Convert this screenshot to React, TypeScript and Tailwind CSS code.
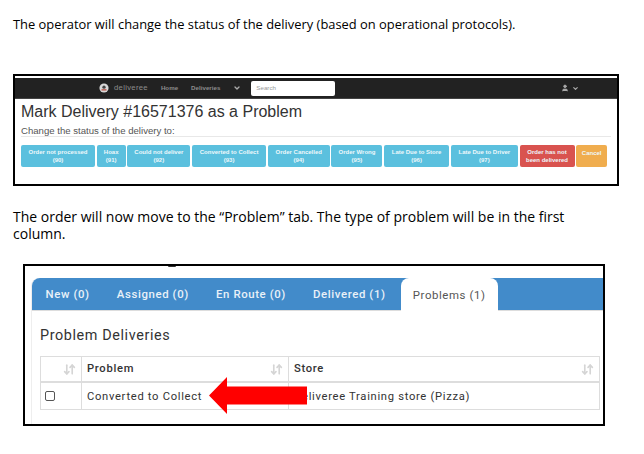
import React from "react";
import { ArrowDownUp, ChevronDown, User } from "lucide-react";

const statusButtons = [
  { label: "Order not processed", code: "(90)", width: "w-[74px]", color: "bg-[#5bc0de]" },
  { label: "Hoax", code: "(91)", width: "w-[29px]", color: "bg-[#5bc0de]" },
  { label: "Could not deliver", code: "(92)", width: "w-[63px]", color: "bg-[#5bc0de]" },
  { label: "Converted to Collect", code: "(93)", width: "w-[74px]", color: "bg-[#5bc0de]" },
  { label: "Order Cancelled", code: "(94)", width: "w-[62px]", color: "bg-[#5bc0de]" },
  { label: "Order Wrong", code: "(95)", width: "w-[51px]", color: "bg-[#5bc0de]" },
  { label: "Late Due to Store", code: "(96)", width: "w-[65px]", color: "bg-[#5bc0de]" },
  { label: "Late Due to Driver", code: "(97)", width: "w-[67px]", color: "bg-[#5bc0de]" },
  { label: "Order has not", code: "been delivered", width: "w-[55px]", color: "bg-[#d9534f]" },
  { label: "Cancel", code: "", width: "w-[31px] pb-[7px]", color: "bg-[#f0ad4e]" },
];

const tabs = ["New (0)", "Assigned (0)", "En Route (0)", "Delivered (1)"];

const SortIcon = () => <ArrowDownUp className="h-[13px] w-[13px] text-[#d5d5d5]" strokeWidth={3} />;

const DeliveryBar = () => (
  <div className="mt-[2px] flex h-[21px] items-center bg-[#222222] border-b border-[#444] pl-[84px] pr-[38px] text-[6.2px] font-bold text-[#8d8d8d]">
    <svg viewBox="0 0 12 12" className="mr-[5px] h-[10px] w-[10px]">
      <circle cx="6" cy="6" r="5.5" fill="#d8d8d8" />
      <path d="M3 7.5h6v1.5H3z" fill="#b84a3c" />
      <circle cx="6" cy="5" r="2" fill="#444" />
    </svg>
    <span className="mr-[13px] text-[7.7px] font-normal tracking-[0.3px]">deliveree</span>
    <span className="mr-[13px]">Home</span>
    <span className="mr-[13px]">Deliveries</span>
    <ChevronDown className="mr-[10px] h-[8px] w-[8px] text-[#aaa]" strokeWidth={4} />
    <div className="flex h-[15px] w-[84px] items-center rounded-[2px] bg-white pl-[5px] font-normal text-[#999]">Search</div>
    <div className="ml-auto flex items-center gap-[3px] text-[#aaa]">
      <User className="h-[8px] w-[8px] fill-current" />
      <ChevronDown className="h-[7px] w-[7px]" strokeWidth={4} />
    </div>
  </div>
);

const App = () => (
  <div className="h-[454px] w-[644px] overflow-hidden bg-white font-['Open_Sans',sans-serif] text-black">
    <p className="pl-[13px] pt-[15px] text-[12.9px] leading-[18px]">
      The operator will change the status of the delivery (based on operational protocols).
    </p>

    <div className="ml-[13px] mt-[41px] h-[112px] w-[606px] border-2 border-black font-['Liberation_Sans',sans-serif]">
      <DeliveryBar />
      <div className="px-[6px] pt-[3px] text-[16px] leading-[20px] text-[#333]">Mark Delivery #16571376 as a Problem</div>
      <div className="mx-[6px] mt-[3px] border-b border-[#e8e8e8] text-[9.6px] leading-[11px] text-[#555]">
        Change the status of the delivery to:
      </div>
      <div className="ml-[6px] mt-[8px] flex gap-[1.7px]">
        {statusButtons.map((b) => (
          <div
            key={b.label}
            className={`flex h-[22px] shrink-0 flex-col items-center justify-center rounded-[2px] text-[6px] font-bold leading-[8px] text-[#eef8fb] ${b.width} ${b.color}`}
          >
            <span className="whitespace-nowrap">{b.label}</span>
            {b.code && <span className="whitespace-nowrap">{b.code}</span>}
          </div>
        ))}
      </div>
    </div>

    <p className="ml-[13px] mt-[22px] w-[580px] text-[14px] leading-[17px]">
      The order will now move to the “Problem” tab. The type of problem will be in the first column.
    </p>

    <div className="relative ml-[23px] mt-[22px] h-[162px] w-[582px] overflow-hidden border-2 border-black pl-[6px] pt-[12px] font-['Roboto',sans-serif] tracking-[0.6px]">
      {/* speck left at the top edge of the crop */}
      <div className="absolute left-[143px] top-0 h-[1px] w-[8px] rounded-b-full bg-[#333]" />
      <div className="h-[170px] rounded-l-[8px] border-l border-b border-[#eeeeee]">
        <div className="flex h-[33px] items-end rounded-tl-[8px] border-b border-[#ddd] bg-[#428bca] text-[11.4px] font-medium text-[#e9f1f8]">
          {tabs.map((t) => (
            <span key={t} className="flex h-[33px] items-center px-[13.6px] pt-[2px]">{t}</span>
          ))}
          <span className="-mb-px ml-[1.5px] flex h-[33px] w-[97px] items-center justify-center rounded-t-[8px] bg-white pt-[2px] font-normal text-[#555]">Problems (1)</span>
        </div>

        <div className="pl-[8px] pr-[2px]">
          <h2 className="mt-[15px] text-[14.4px] font-normal leading-[20px] text-[#333]">Problem Deliveries</h2>
          <div className="mt-[10px] w-[560px] border border-[#ddd] text-[11.2px] tracking-[0.7px] text-[#333]">
            <div className="flex h-[26px] border-b-2 border-[#ddd] font-medium">
              <div className="flex w-[41px] items-center justify-end border-r border-[#ddd] pr-[5px]"><SortIcon /></div>
              <div className="flex w-[207px] items-center justify-between border-r border-[#ddd] px-[5px] pt-[1px]">Problem<SortIcon /></div>
              <div className="flex flex-1 items-center justify-between px-[5px] pt-[1px]">Store<SortIcon /></div>
            </div>
            <div className="flex h-[26px]">
              <div className="flex w-[41px] items-center border-r border-[#ddd] pl-[4px]">
                <div className="h-[10px] w-[10px] rounded-[2px] border border-[#555] bg-white" />
              </div>
              <div className="flex w-[207px] items-center border-r border-[#ddd] px-[5px] pt-[2px]">Converted to Collect</div>
              <div className="flex flex-1 items-center px-[5px] pt-[2px]">Deliveree Training store (Pizza)</div>
            </div>
          </div>
        </div>
      </div>

      {/* red arrow pasted over the table */}
      <svg viewBox="0 0 98 37" className="absolute left-[184px] top-[111px] h-[37px] w-[98px]">
        <path d="M0 18.5 18 0V9.5H98V27.5H18V37Z" fill="#ff0000" />
      </svg>
    </div>
  </div>
);

export default App;
